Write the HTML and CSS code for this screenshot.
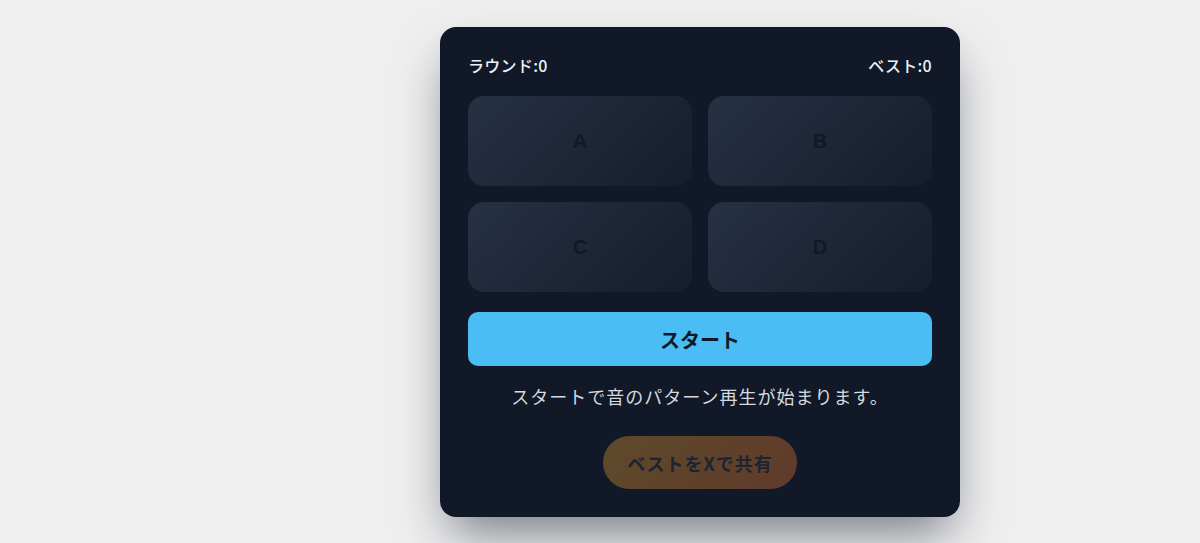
FILE: index.html
```html
<!DOCTYPE html>
<html lang="ja">

<head>
    <meta charset="UTF-8">
    <meta name="viewport" content="width=device-width, initial-scale=1.0">
    <title>音のパターン</title>
    <link rel="stylesheet" href="styles.css">
</head>

<body>
    <div class="stage">
        <div class="card">
            <div class="stats">
                <span>ラウンド:0</span>
                <span>ベスト:0</span>
            </div>
            <div class="pads">
                <button class="pad">A</button>
                <button class="pad">B</button>
                <button class="pad">C</button>
                <button class="pad">D</button>
            </div>
            <button class="start">スタート</button>
            <p class="message">スタートで音のパターン再生が始まります。</p>
            <div class="share-row">
                <button class="share">ベストをXで共有</button>
            </div>
        </div>
    </div>
</body>

</html>
```

FILE: styles.css
```css
html,
body {
    min-height: 100%;
    height: 100%;
}

body {
    margin: 0;
    padding: 0;
    background-color: #efefef;
    font-family: 'Noto Sans CJK JP', 'Noto Sans', sans-serif;
}

.stage {
    padding: 27px 0 0 440px;
}

.card {
    box-sizing: border-box;
    width: 520px;
    height: 490px;
    padding: 28px;
    background-color: #111827;
    border-radius: 16px;
    box-shadow: 0 25px 50px -10px rgba(15, 23, 42, 0.55);
}

.stats {
    display: flex;
    justify-content: space-between;
    height: 20px;
    line-height: 20px;
    font-size: 16px;
    font-weight: 500;
    letter-spacing: 0.3px;
    color: #eef0f4;
    margin-bottom: 21px;
}

.pads {
    display: grid;
    grid-template-columns: 1fr 1fr;
    grid-auto-rows: 90px;
    gap: 16px;
}

.pad {
    border: none;
    border-radius: 16px;
    background: linear-gradient(135deg, #263144 0%, #161d2c 100%);
    color: #111827;
    font-family: 'Liberation Sans', sans-serif;
    font-size: 20px;
    font-weight: 700;
    padding: 0;
}

.start {
    display: block;
    width: 100%;
    height: 54px;
    margin-top: 20px;
    border: none;
    border-radius: 10px;
    background-color: #4abdf5;
    color: #111827;
    font-family: inherit;
    font-size: 20px;
    font-weight: 700;
}

.message {
    margin: 16px 0 0;
    line-height: 28px;
    font-size: 18px;
    letter-spacing: 1px;
    text-align: center;
    color: #d6d9df;
}

.share-row {
    display: flex;
    justify-content: center;
    margin-top: 26px;
}

.share {
    width: 194px;
    height: 53px;
    border: none;
    border-radius: 27px;
    background: linear-gradient(135deg, #5e4a2a 0%, #603a2b 100%);
    color: #1c2433;
    font-family: inherit;
    font-size: 18px;
    font-weight: 700;
    letter-spacing: 1px;
}
```
